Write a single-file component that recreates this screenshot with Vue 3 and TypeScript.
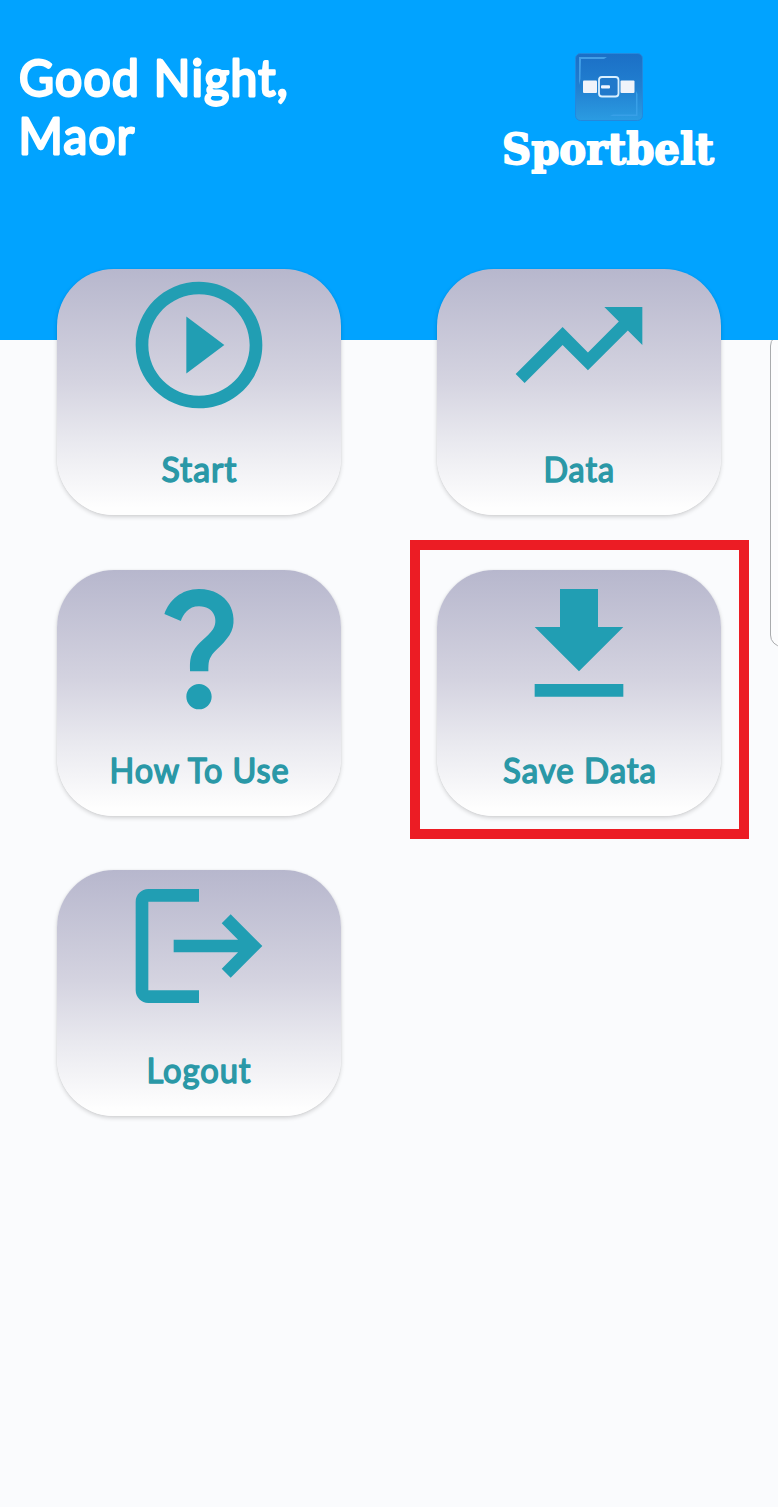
<script setup lang="ts">
interface Label {
  text: string
  x: number
  width: number
}

interface Tile {
  id: string
  label: Label
  icon: string
  marked?: boolean
}

const tiles: Tile[] = [
  {
    id: 'start',
    label: { text: 'Start', x: 104.5, width: 76 },
    icon: 'M10 16.5l6-4.5-6-4.5v9zM12 2C6.48 2 2 6.48 2 12s4.48 10 10 10 10-4.48 10-10S17.52 2 12 2zm0 18c-4.41 0-8-3.59-8-8s3.59-8 8-8 8 3.59 8 8-3.59 8-8 8z',
  },
  {
    id: 'data',
    label: { text: 'Data', x: 106.5, width: 71.5 },
    icon: 'M16 6l2.29 2.29-4.88 4.88-4-4L2 16.59 3.41 18l6-6 4 4 6.3-6.29L22 12V6z',
  },
  {
    id: 'how',
    label: { text: 'How To Use', x: 52.5, width: 180 },
    icon: 'M11.07 12.85c.77-1.39 2.25-2.21 3.11-3.44.91-1.29.4-3.7-2.18-3.7-1.69 0-2.52 1.28-2.87 2.34L6.54 6.96C7.25 4.83 9.18 3 11.99 3c2.35 0 3.96 1.07 4.78 2.41.7 1.15 1.11 3.3.03 4.9-1.2 1.77-2.35 2.31-2.97 3.45-.25.46-.35.76-.35 2.24h-2.89c-.01-.78-.13-2.05.48-3.15zM14 20c0 1.1-.9 2-2 2s-2-.9-2-2 .9-2 2-2 2 .9 2 2z',
  },
  {
    id: 'save',
    label: { text: 'Save Data', x: 66, width: 154 },
    icon: 'M19 9h-4V3H9v6H5l7 7 7-7zM5 18v2h14v-2H5z',
    marked: true,
  },
  {
    id: 'logout',
    label: { text: 'Logout', x: 89.5, width: 105 },
    icon: 'M17 7l-1.41 1.41L18.17 11H8v2h10.17l-2.58 2.58L17 17l5-5-5-5zM4 5h8V3H4c-1.1 0-2 .9-2 2v14c0 1.1.9 2 2 2h8v-2H4V5z',
  },
]
</script>

<template>
  <div class="screen">
    <header class="header">
      <svg class="greeting" width="310" height="130" viewBox="0 0 310 130">
        <text x="19" y="55" textLength="270" lengthAdjust="spacingAndGlyphs">Good Night,</text>
        <text x="18.5" y="112.5" textLength="117" lengthAdjust="spacingAndGlyphs">Maor</text>
      </svg>
      <div class="brand">
        <svg class="logo" width="70" height="70" viewBox="0 0 70 70">
          <defs>
            <linearGradient id="logoFill" x1="0" y1="0" x2="0" y2="1">
              <stop offset="0" stop-color="#1b6fc6" />
              <stop offset="0.5" stop-color="#217fd0" />
              <stop offset="1" stop-color="#2b9ce2" />
            </linearGradient>
          </defs>
          <rect x="1.5" y="1.5" width="67" height="67" rx="5" fill="url(#logoFill)" stroke="#2488dc" />
          <path d="M5 33V5h28l-3 2H7l-.5 20z" fill="#429ee6" />
          <path d="M62 39l1.5 3v22H36l3-1.5h23z" fill="#38a0e8" />
          <rect x="9" y="28.5" width="14" height="12.5" rx="1" fill="#f0f3fa" />
          <rect x="46.5" y="28.5" width="14" height="12.5" rx="1" fill="#f0f3fa" />
          <rect x="25" y="25" width="19.5" height="19.5" rx="3" fill="#2179cb" stroke="#d9f0ff" stroke-width="1.8" />
          <rect x="27" y="33.2" width="9" height="3.4" rx="1" fill="#f0f6ff" />
        </svg>
        <svg class="wordmark" width="250" height="80" viewBox="0 0 250 80">
          <text x="18" y="52" textLength="212" lengthAdjust="spacingAndGlyphs">Sportbelt</text>
        </svg>
      </div>
    </header>

    <main class="tiles">
      <button v-for="tile in tiles" :key="tile.id" type="button" class="tile" :class="{ marked: tile.marked }">
        <svg class="icon" viewBox="0 0 24 24"><path :d="tile.icon" /></svg>
        <svg class="label" width="284" height="60" viewBox="0 0 284 60">
          <text :x="tile.label.x" y="40" :textLength="tile.label.width" lengthAdjust="spacingAndGlyphs">{{ tile.label.text }}</text>
        </svg>
      </button>
    </main>

    <aside class="edge-panel"></aside>
  </div>
</template>

<style>
body {
  margin: 0;
}
</style>

<style scoped>
.screen {
  position: relative;
  width: 778px;
  height: 1507px;
  overflow: hidden;
  background: #fafbfd;
}

.header {
  display: flex;
  justify-content: space-between;
  box-sizing: border-box;
  height: 340px;
  background: #01a3ff;
}

.greeting {
  margin-top: 41px;
  font: 400 51px Lato, "Noto Sans", sans-serif;
  letter-spacing: 1.4px;
  fill: #fff;
  stroke: #fff;
  stroke-width: 2.8px;
  stroke-linejoin: round;
}

.brand {
  display: flex;
  flex-direction: column;
  align-items: center;
  width: 250px;
  margin: 52px 44px 0 0;
}

.wordmark {
  flex: none;
  margin-top: -10px;
  overflow: visible;
  font: 700 43px "DejaVu Serif", serif;
  fill: #fff;
  stroke: #fff;
  stroke-width: 1.8px;
  stroke-linejoin: round;
}

.tiles {
  display: grid;
  grid-template-columns: 284px 284px;
  grid-auto-rows: 246px;
  gap: 54.6px 96px;
  margin: -71px 57px 0;
}

.tile {
  position: relative;
  display: flex;
  flex-direction: column;
  align-items: center;
  padding: 0;
  border: 0;
  border-radius: 57px;
  background: linear-gradient(#b7b7cd, #d4d3e0 45%, #e9e9ef 70%, #fefefe 97%);
  box-shadow: 0 2px 4px rgba(0, 0, 0, 0.17), 0 0 2px rgba(0, 0, 0, 0.06);
}

.marked::after {
  content: "";
  position: absolute;
  inset: -29.6px -28px -23.4px -27px;
  border: 10px solid #ec1c24;
}

.icon {
  width: 152px;
  height: 152px;
  fill: #219eb3;
}

.label {
  margin-top: 21px;
  font: 400 34px Lato, "Noto Sans", sans-serif;
  letter-spacing: 1px;
  fill: #2a98a7;
  stroke: #2a98a7;
  stroke-width: 1.5px;
  stroke-linejoin: round;
}

.edge-panel {
  position: absolute;
  top: 334px;
  left: 770px;
  box-sizing: border-box;
  width: 40px;
  height: 313px;
  border: 1px solid #a9abad;
  border-radius: 12px;
  background: #fcfcfd;
  clip-path: inset(6px 0 0 0);
}
</style>
